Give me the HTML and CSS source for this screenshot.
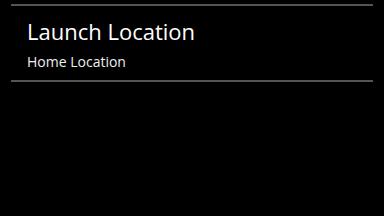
FILE: index.html
```html
<!DOCTYPE html>
<html lang="en">
<head>
  <meta charset="UTF-8" />
  <title>Launch Location</title>
  <link rel="stylesheet" href="styles.css">
</head>
<body>

<!-- setting row -->
<div class="setting">
  <div class="setting-title">Launch Location</div>
  <div class="setting-value">Home Location</div>
</div>

</body>
</html>
```

FILE: styles.css
```css
* {
  margin: 0;
  padding: 0;
  box-sizing: border-box;
}
body, html {
  height: 100%;
  background: #000;
  color: #fff;
  font-family: 'Open Sans', sans-serif;
  overflow: hidden;
}

.setting {
  margin: 4px 11px 0 11px;
  width: 362px;
  border-top: 2px solid #555;
  border-bottom: 2px solid #555;
  padding: 11px 16px 8px 16px;
}

.setting-title {
  font-size: 22px;
  line-height: 28px;
}

.setting-value {
  font-size: 14px;
  line-height: 20px;
  margin-top: 7px;
  color: #eee;
}
```
